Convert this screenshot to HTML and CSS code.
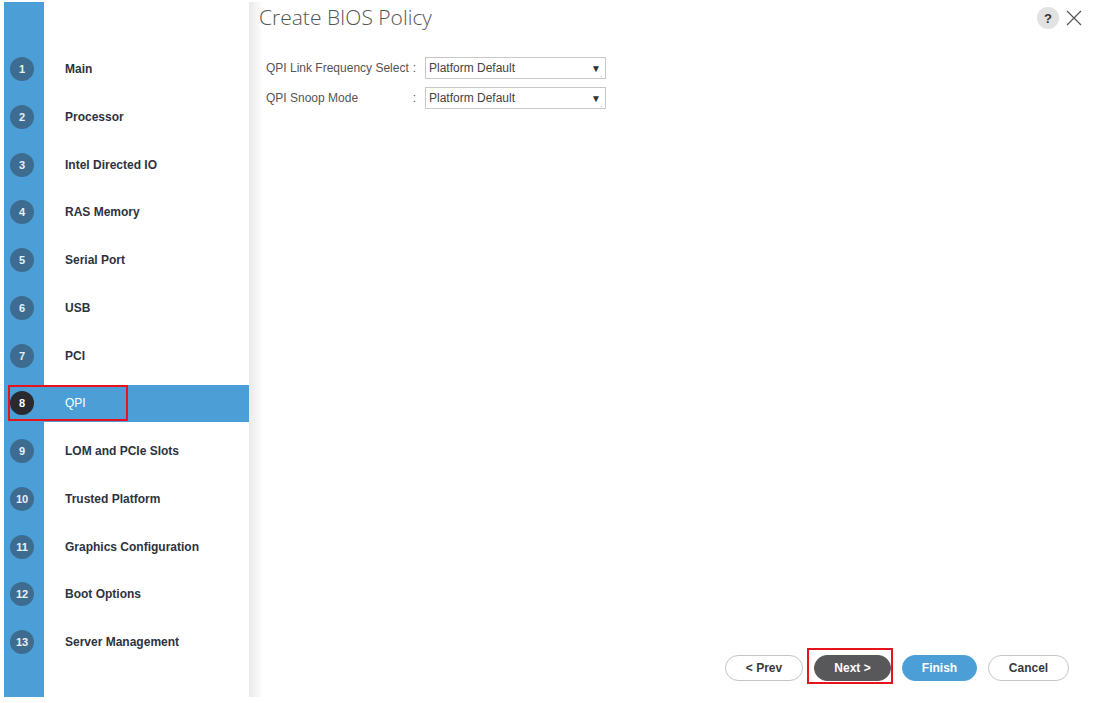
FILE: index.html
```html
<!DOCTYPE html>
<html lang="en">

<head>
    <meta charset="UTF-8">
    <title>Create BIOS Policy</title>
    <link rel="stylesheet" href="styles.css">
</head>

<body>
    <div class="wizard">
        <aside class="steps">
            <ul class="step-list">
                <li class="step"><span class="step-num">1</span><span class="step-name">Main</span></li>
                <li class="step"><span class="step-num">2</span><span class="step-name">Processor</span></li>
                <li class="step"><span class="step-num">3</span><span class="step-name">Intel Directed IO</span></li>
                <li class="step"><span class="step-num">4</span><span class="step-name">RAS Memory</span></li>
                <li class="step"><span class="step-num">5</span><span class="step-name">Serial Port</span></li>
                <li class="step"><span class="step-num">6</span><span class="step-name">USB</span></li>
                <li class="step"><span class="step-num">7</span><span class="step-name">PCI</span></li>
                <li class="step active"><span class="step-num">8</span><span class="step-name">QPI</span><span class="mark mark-step"></span></li>
                <li class="step"><span class="step-num">9</span><span class="step-name">LOM and PCIe Slots</span></li>
                <li class="step"><span class="step-num">10</span><span class="step-name">Trusted Platform</span></li>
                <li class="step"><span class="step-num">11</span><span class="step-name">Graphics Configuration</span></li>
                <li class="step"><span class="step-num">12</span><span class="step-name">Boot Options</span></li>
                <li class="step"><span class="step-num">13</span><span class="step-name">Server Management</span></li>
            </ul>
        </aside>

        <main class="panel">
            <div class="panel-head">
                <h1 class="title">Create BIOS Policy</h1>
                <div class="head-tools">
                    <span class="help">?</span>
                    <svg class="close" width="16" height="16" viewBox="0 0 16 16">
                        <path d="M1 1 L15 15 M15 1 L1 15" stroke="#555" stroke-width="1.2" fill="none" />
                    </svg>
                </div>
            </div>

            <div class="form">
                <div class="form-row">
                    <label class="form-label"><span>QPI Link Frequency Select</span><span class="colon">:</span></label>
                    <div class="select"><span>Platform Default</span><span class="arrow">▼</span><span class="grip"></span></div>
                </div>
                <div class="form-row">
                    <label class="form-label"><span>QPI Snoop Mode</span><span class="colon">:</span></label>
                    <div class="select"><span>Platform Default</span><span class="arrow">▼</span><span class="grip"></span></div>
                </div>
            </div>

            <div class="actions">
                <button class="btn btn-light">&lt; Prev</button>
                <span class="btn-wrap">
                    <button class="btn btn-dark">Next &gt;</button>
                    <span class="mark mark-next"></span>
                </span>
                <button class="btn btn-blue">Finish</button>
                <button class="btn btn-light btn-cancel">Cancel</button>
            </div>
        </main>
    </div>
</body>

</html>
```

FILE: styles.css
```css
* {
    margin: 0;
    padding: 0;
    box-sizing: border-box;
}

body {
    background: #fff;
    font-family: 'Liberation Sans', Arial, sans-serif;
    color: #333;
}

.wizard {
    display: flex;
    height: 697px;
    padding: 2px 0 0 4px;
}

/* left step list */

.steps {
    width: 245px;
    flex-shrink: 0;
    background: linear-gradient(to right, #4b9fd6 40px, #fff 40px);
    padding-top: 48.5px;
}

.step-list {
    list-style: none;
    display: flex;
    flex-direction: column;
    gap: 10.75px;
}

.step {
    position: relative;
    height: 37px;
    display: flex;
    align-items: center;
}

.step-num {
    width: 24px;
    height: 24px;
    margin-left: 6px;
    border-radius: 50%;
    background: #3e6c91;
    color: #e9f1f7;
    font-size: 11px;
    font-weight: bold;
    display: flex;
    align-items: center;
    justify-content: center;
    flex-shrink: 0;
}

.step-name {
    margin-left: 31px;
    font-size: 12px;
    font-weight: bold;
    color: #2d3340;
}

.step.active {
    background: #4b9fd6;
}

.step.active .step-num {
    background: #2a2a2e;
    color: #fff;
}

.step.active .step-name {
    color: #fff;
    font-weight: normal;
}

.mark {
    position: absolute;
    border: 2px solid #e8121c;
    pointer-events: none;
}

.mark-step {
    left: 4px;
    top: 0;
    width: 120px;
    height: 36px;
}

/* main panel */

.panel {
    flex: 1;
    display: flex;
    flex-direction: column;
    background: linear-gradient(to right, #e9e9e9, #fff 14px);
}

.panel-head {
    display: flex;
    justify-content: space-between;
    align-items: flex-start;
    padding: 1px 18px 0 10px;
}

.title {
    font-family: 'Open Sans', sans-serif;
    font-weight: 300;
    font-size: 21px;
    color: #555;
}

.head-tools {
    display: flex;
    align-items: center;
    gap: 7px;
    margin-top: 4px;
}

.help {
    width: 22px;
    height: 22px;
    border-radius: 50%;
    background: #e2e2e2;
    color: #333;
    font-size: 13px;
    font-weight: bold;
    display: flex;
    align-items: center;
    justify-content: center;
}

.form {
    padding: 26px 0 0 17px;
    display: flex;
    flex-direction: column;
    gap: 8px;
}

.form-row {
    display: flex;
    align-items: center;
}

.form-label {
    width: 159px;
    display: flex;
    justify-content: space-between;
    font-size: 12px;
    color: #555;
    padding-right: 9px;
}

.select {
    position: relative;
    width: 181px;
    height: 22px;
    border: 1px solid #c8c8c8;
    display: flex;
    align-items: center;
    justify-content: space-between;
    padding: 0 4px 0 3px;
    font-size: 12px;
    color: #444;
}

.arrow {
    font-size: 10px;
    color: #333;
}

.grip {
    position: absolute;
    right: 3px;
    bottom: 1px;
    width: 1px;
    height: 1px;
    background: #bbb;
}

/* footer buttons */

.actions {
    margin-top: auto;
    display: flex;
    justify-content: flex-end;
    gap: 11px;
    padding: 0 31px 16px 0;
}

.btn {
    height: 26px;
    border-radius: 13px;
    font-family: 'Liberation Sans', Arial, sans-serif;
    font-size: 12px;
    font-weight: bold;
    border: 1px solid #c6c6c6;
    background: #fff;
    color: #3a3a3a;
}

.btn-light {
    width: 78px;
}

.btn-cancel {
    width: 81px;
}

.btn-wrap {
    position: relative;
    display: flex;
}

.btn-dark {
    width: 77px;
    background: #58585b;
    border-color: #58585b;
    color: #fff;
}

.mark-next {
    left: -7px;
    right: -2px;
    top: -7px;
    bottom: -3px;
}

.btn-blue {
    width: 75px;
    background: #4b9fd6;
    border-color: #4b9fd6;
    color: #fff;
}
```
